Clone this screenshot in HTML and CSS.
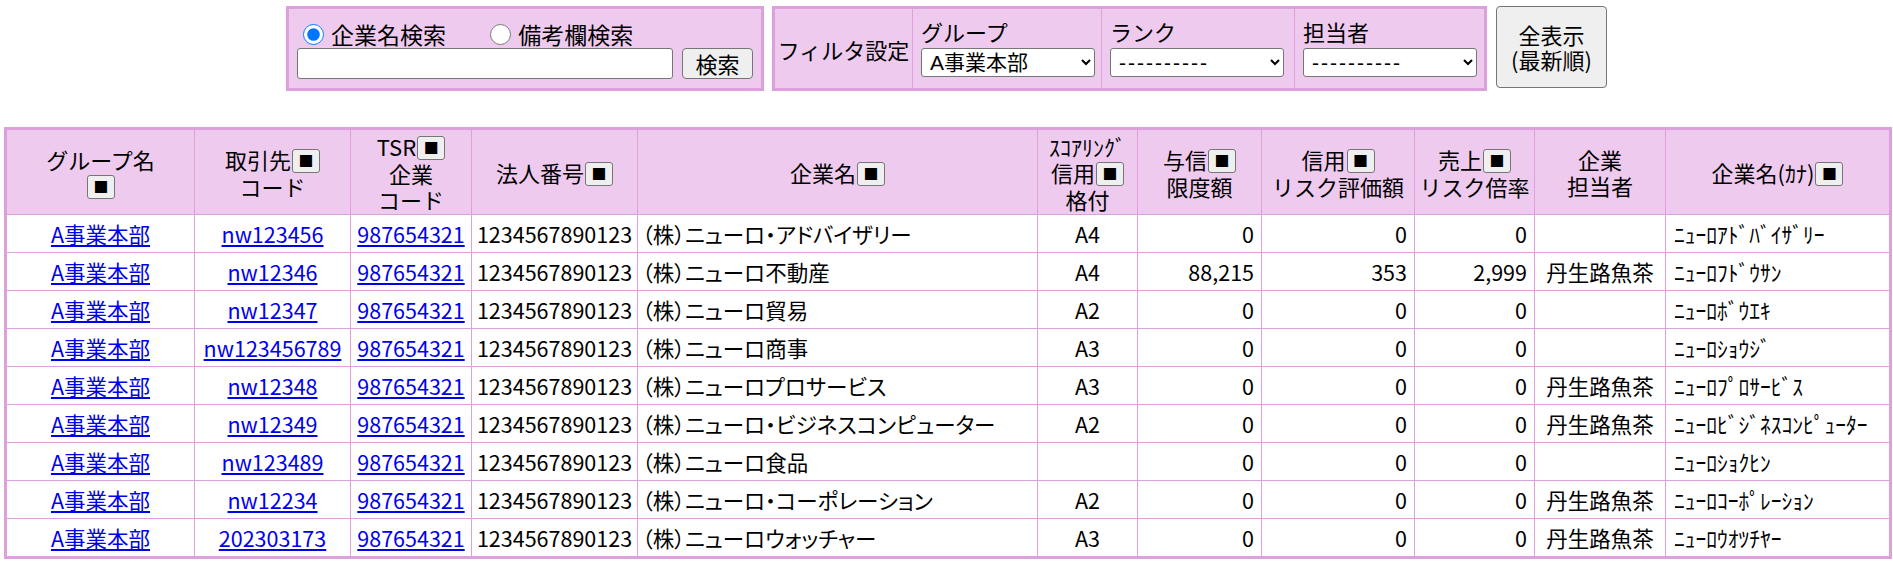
FILE: index.html
```html
<!DOCTYPE html>
<html lang="ja">
<head>
	<meta charset="UTF-8">
	<title>取引先一覧</title>
	<link rel="stylesheet" href="styles.css">
</head>
<body>
<div class="toolbar">
	<form class="search" onsubmit="return false;">
		<div class="search-mode">
			<label><input type="radio" name="mode" checked>企業名検索</label>
			<label class="mode2"><input type="radio" name="mode">備考欄検索</label>
		</div>
		<div class="search-row">
			<input type="text" class="keyword">
			<button type="button" class="btn">検索</button>
		</div>
	</form>

	<div class="filter">
		<div class="filter-title">フィルタ設定</div>
		<div class="filter-cell wide">
			<div class="filter-label">グループ</div>
			<select><option>A事業本部</option></select>
		</div>
		<div class="filter-cell">
			<div class="filter-label">ランク</div>
			<select class="dash"><option>----------</option></select>
		</div>
		<div class="filter-cell last">
			<div class="filter-label">担当者</div>
			<select class="dash"><option>----------</option></select>
		</div>
	</div>

	<button type="button" class="btn all">全表示<br>(最新順)</button>
</div>

<table class="list">
	<colgroup>
		<col style="width:189px"><col style="width:156px"><col style="width:121px"><col style="width:166px">
		<col style="width:400px"><col style="width:100px"><col style="width:124px"><col style="width:153px">
		<col style="width:120px"><col style="width:131px"><col style="width:225px">
	</colgroup>
	<thead>
		<tr>
			<th>グループ名<br><button type="button" class="sort">■</button></th>
			<th>取引先<button type="button" class="sort">■</button><br>コード</th>
			<th>TSR<button type="button" class="sort">■</button><br>企業<br>コード</th>
			<th>法人番号<button type="button" class="sort">■</button></th>
			<th>企業名<button type="button" class="sort">■</button></th>
			<th><span class="han">ｽｺｱﾘﾝｸﾞ</span><br>信用<button type="button" class="sort">■</button><br>格付</th>
			<th>与信<button type="button" class="sort">■</button><br>限度額</th>
			<th>信用<button type="button" class="sort">■</button><br>リスク評価額</th>
			<th>売上<button type="button" class="sort">■</button><br>リスク倍率</th>
			<th>企業<br>担当者</th>
			<th>企業名<span class="han">(ｶﾅ)</span><button type="button" class="sort">■</button></th>
		</tr>
	</thead>
	<tbody>
		<tr>
			<td class="c"><a href="#">A事業本部</a></td><td class="c"><a href="#">nw123456</a></td><td class="c"><a href="#">987654321</a></td>
			<td class="c">1234567890123</td><td class="name">（株）ニューロ・アドバイザリー</td><td class="c">A4</td>
			<td class="r">0</td><td class="r">0</td><td class="r">0</td><td class="c"></td><td class="kana">ﾆｭｰﾛｱﾄﾞﾊﾞｲｻﾞﾘｰ</td>
		</tr>
		<tr>
			<td class="c"><a href="#">A事業本部</a></td><td class="c"><a href="#">nw12346</a></td><td class="c"><a href="#">987654321</a></td>
			<td class="c">1234567890123</td><td class="name">（株）ニューロ不動産</td><td class="c">A4</td>
			<td class="r">88,215</td><td class="r">353</td><td class="r">2,999</td><td class="c">丹生路魚茶</td><td class="kana">ﾆｭｰﾛﾌﾄﾞｳｻﾝ</td>
		</tr>
		<tr>
			<td class="c"><a href="#">A事業本部</a></td><td class="c"><a href="#">nw12347</a></td><td class="c"><a href="#">987654321</a></td>
			<td class="c">1234567890123</td><td class="name">（株）ニューロ貿易</td><td class="c">A2</td>
			<td class="r">0</td><td class="r">0</td><td class="r">0</td><td class="c"></td><td class="kana">ﾆｭｰﾛﾎﾞｳｴｷ</td>
		</tr>
		<tr>
			<td class="c"><a href="#">A事業本部</a></td><td class="c"><a href="#">nw123456789</a></td><td class="c"><a href="#">987654321</a></td>
			<td class="c">1234567890123</td><td class="name">（株）ニューロ商事</td><td class="c">A3</td>
			<td class="r">0</td><td class="r">0</td><td class="r">0</td><td class="c"></td><td class="kana">ﾆｭｰﾛｼｮｳｼﾞ</td>
		</tr>
		<tr>
			<td class="c"><a href="#">A事業本部</a></td><td class="c"><a href="#">nw12348</a></td><td class="c"><a href="#">987654321</a></td>
			<td class="c">1234567890123</td><td class="name">（株）ニューロプロサービス</td><td class="c">A3</td>
			<td class="r">0</td><td class="r">0</td><td class="r">0</td><td class="c">丹生路魚茶</td><td class="kana">ﾆｭｰﾛﾌﾟﾛｻｰﾋﾞｽ</td>
		</tr>
		<tr>
			<td class="c"><a href="#">A事業本部</a></td><td class="c"><a href="#">nw12349</a></td><td class="c"><a href="#">987654321</a></td>
			<td class="c">1234567890123</td><td class="name">（株）ニューロ・ビジネスコンピューター</td><td class="c">A2</td>
			<td class="r">0</td><td class="r">0</td><td class="r">0</td><td class="c">丹生路魚茶</td><td class="kana">ﾆｭｰﾛﾋﾞｼﾞﾈｽｺﾝﾋﾟｭｰﾀｰ</td>
		</tr>
		<tr>
			<td class="c"><a href="#">A事業本部</a></td><td class="c"><a href="#">nw123489</a></td><td class="c"><a href="#">987654321</a></td>
			<td class="c">1234567890123</td><td class="name">（株）ニューロ食品</td><td class="c"></td>
			<td class="r">0</td><td class="r">0</td><td class="r">0</td><td class="c"></td><td class="kana">ﾆｭｰﾛｼｮｸﾋﾝ</td>
		</tr>
		<tr>
			<td class="c"><a href="#">A事業本部</a></td><td class="c"><a href="#">nw12234</a></td><td class="c"><a href="#">987654321</a></td>
			<td class="c">1234567890123</td><td class="name">（株）ニューロ・コーポレーション</td><td class="c">A2</td>
			<td class="r">0</td><td class="r">0</td><td class="r">0</td><td class="c">丹生路魚茶</td><td class="kana">ﾆｭｰﾛｺｰﾎﾟﾚｰｼｮﾝ</td>
		</tr>
		<tr>
			<td class="c"><a href="#">A事業本部</a></td><td class="c"><a href="#">202303173</a></td><td class="c"><a href="#">987654321</a></td>
			<td class="c">1234567890123</td><td class="name">（株）ニューロウォッチャー</td><td class="c">A3</td>
			<td class="r">0</td><td class="r">0</td><td class="r">0</td><td class="c">丹生路魚茶</td><td class="kana">ﾆｭｰﾛｳｵﾂﾁﾔｰ</td>
		</tr>
	</tbody>
</table>
</body>
</html>
```

FILE: styles.css
```css
body {
	margin: 0;
	font-family: "Noto Sans CJK JP", sans-serif;
	font-size: 22px;
	color: #000;
}

/* top area */
.toolbar {
	display: flex;
	justify-content: center;
	align-items: flex-start;
	padding-top: 6px;
}

.search {
	box-sizing: border-box;
	width: 478px;
	height: 85px;
	margin: 0 8px 0 0;
	padding: 12px 8px 0 8px;
	border: 3px solid #dda0dd;
	background: #eecbee;
}

.search-mode {
	height: 27px;
	line-height: 27px;
	font-size: 23px;
}

.search-mode label {
	display: inline-flex;
	align-items: center;
}

.search-mode input {
	width: 21px;
	height: 21px;
	margin: 0 7px 0 6px;
}

.search-mode .mode2 {
	margin-left: 33px;
}

.search-row {
	display: flex;
	gap: 9px;
}

.keyword {
	box-sizing: border-box;
	width: 376px;
	height: 31px;
	border: 1px solid #767676;
	border-radius: 3px;
	font: inherit;
}

.btn {
	font-family: inherit;
	font-size: 22px;
	color: #000;
	background: #efefef;
	border: 1px solid #767676;
	border-radius: 4px;
	padding: 0;
	line-height: 25px;
}

.search-row .btn {
	width: 71px;
	height: 31px;
}

.btn.all {
	width: 111px;
	height: 82px;
	margin-left: 9px;
}

.filter {
	display: flex;
	height: 85px;
	box-sizing: border-box;
	border: 3px solid #dda0dd;
	background: #eecbee;
}

.filter-title {
	width: 137px;
	display: flex;
	align-items: center;
	justify-content: center;
}

.filter-cell {
	width: 184px;
	padding: 8px 0 0 8px;
	border-left: 1px solid #dda0dd;
}

.filter-cell.wide {
	width: 180px;
}

.filter-cell.last {
	width: 181px;
}

.filter-label {
	line-height: 29px;
}

.filter-cell select {
	display: block;
	box-sizing: border-box;
	width: 174px;
	height: 29px;
	margin-top: 2px;
	font-family: "Liberation Sans", "Noto Sans CJK JP", sans-serif;
	font-size: 21px;
	padding: 0 4px;
	border: 1px solid #767676;
	border-radius: 3px;
	background: #fff;
	color: #000;
}

.filter-cell select.dash {
	letter-spacing: 2px;
}

/* list */
.list {
	width: calc(100% - 8px);
	margin: 36px 4px 0 4px;
	table-layout: fixed;
	border-collapse: collapse;
	border: 3px solid #dda0dd;
}

.list th,
.list td {
	border: 1px solid #dda0dd;
	padding: 0 4px;
	white-space: nowrap;
	overflow: hidden;
}

.list th {
	height: 84px;
	background: #eecbee;
	font-weight: normal;
	line-height: 26px;
}

.list td {
	height: 37px;
	line-height: 26px;
	font-size: 21.5px;
}

.list td.r {
	padding-right: 7px;
}

.sort {
	box-sizing: border-box;
	width: 28px;
	height: 24px;
	margin-left: 1px;
	padding: 0;
	vertical-align: 2px;
	border: 1px solid #767676;
	border-radius: 3px;
	background: #efefef;
	font-family: "Noto Sans CJK JP", sans-serif;
	font-size: 15px;
	line-height: 20px;
	color: #000;
}

.list a {
	color: #0000ee;
}

.c { text-align: center; }
.r { text-align: right; }

.name {
	font-feature-settings: "palt";
	padding-left: 6px;
}

.list td.kana {
	padding-left: 8px;
}
```
